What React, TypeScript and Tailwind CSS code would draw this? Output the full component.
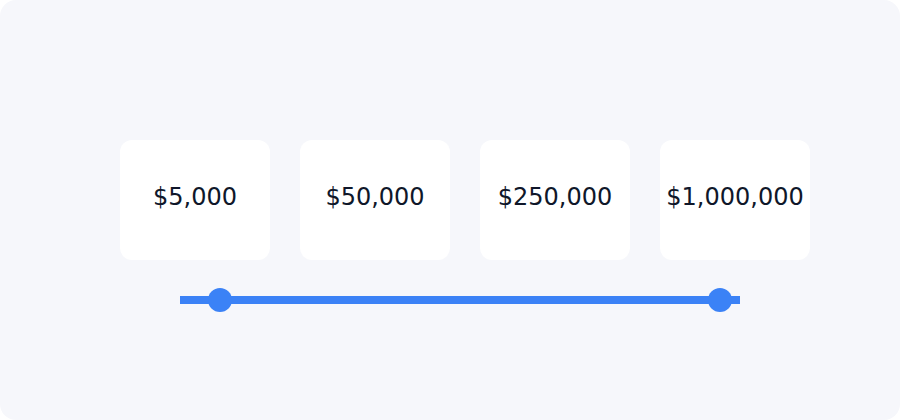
export default function App() {
  const values = ["$5,000", "$50,000", "$250,000", "$1,000,000"];
  return (
    <div className="w-[900px] h-[420px] bg-white">
      <div
        className="w-[900px] h-[420px] rounded-2xl bg-[#f6f7fb] pt-[140px] pl-[120px] flex flex-col"
        style={{ fontFamily: '"DejaVu Sans", sans-serif' }}
      >
        <div className="flex gap-[30px]">
          {values.map((v) => (
            <div
              key={v}
              className="w-[150px] h-[120px] rounded-xl bg-white flex items-center justify-center text-[24px] text-[#0f172a] pb-[6px]"
            >
              {v}
            </div>
          ))}
        </div>
        <div className="relative ml-[60px] mt-[36px] w-[560px] h-[8px] bg-[#3b82f6]">
          <div className="absolute left-[28px] top-[-8px] w-[24px] h-[24px] rounded-full bg-[#3b82f6]" />
          <div className="absolute left-[528px] top-[-8px] w-[24px] h-[24px] rounded-full bg-[#3b82f6]" />
        </div>
      </div>
    </div>
  );
}
